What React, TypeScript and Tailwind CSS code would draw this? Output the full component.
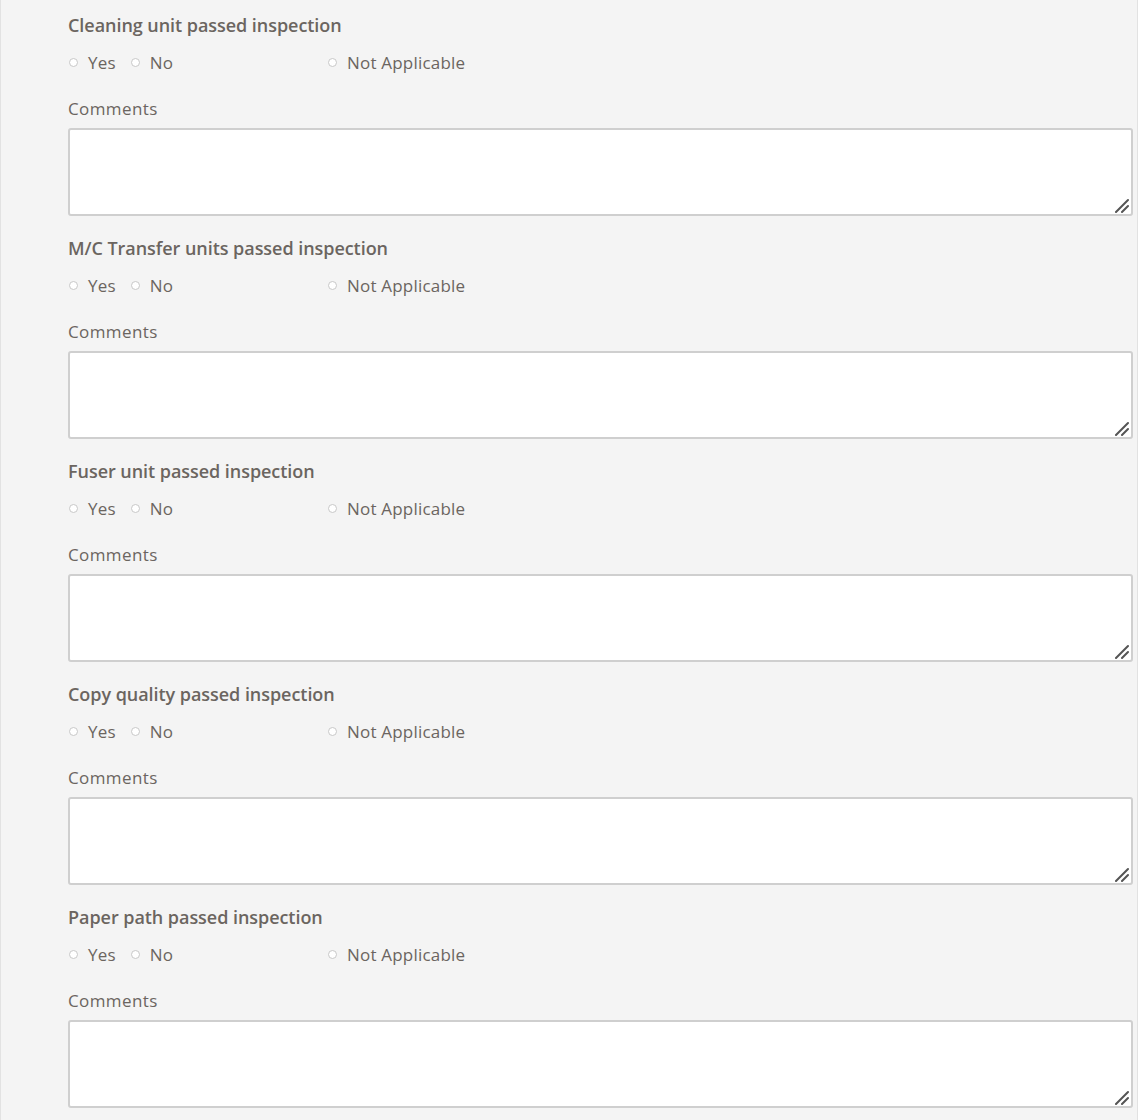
const items = [
  'Cleaning unit passed inspection',
  'M/C Transfer units passed inspection',
  'Fuser unit passed inspection',
  'Copy quality passed inspection',
  'Paper path passed inspection',
];

function Radio({ label, name }: { label: string; name: string }) {
  return (
    <label className="flex items-center gap-[10px]">
      <input type="radio" name={name} className="sr-only" />
      <span className="-mt-[2px] ml-px h-[9px] w-[9px] rounded-full border border-[#c8c8c8] bg-white" />
      <span>{label}</span>
    </label>
  );
}

export default function App() {
  return (
    <div
      className="min-h-[1120px] border-x border-[#e2e2e2] bg-[#f4f4f4] pl-[67px] pr-[4px] text-[#6b6560]"
      style={{ fontFamily: '"Open Sans", sans-serif' }}
    >
      {items.map((title, i) => (
        <div key={title} className="pt-[12px] pb-[7px]">
          <div className="text-[18px] font-semibold leading-[26px] tracking-[-0.05px]">{title}</div>
          <div className="mt-[12px] flex h-[26px] items-center text-[17px] tracking-[0.2px]">
            <div className="flex w-[259px] items-center">
              <Radio label="Yes" name={`q${i}`} />
              <div className="ml-[14px]"><Radio label="No" name={`q${i}`} /></div>
            </div>
            <Radio label="Not Applicable" name={`q${i}`} />
          </div>
          <div className="mt-[20px] text-[17px] leading-[26px] tracking-[0.4px]">Comments</div>
          <div className="relative mt-[6px]">
            <textarea className="block h-[88px] w-full resize-none rounded-[3px] border-2 border-[#cfcfcf] bg-white outline-none" />
            <svg className="pointer-events-none absolute bottom-[3px] right-[4px]" width="15" height="15" viewBox="0 0 15 15">
              <path d="M2 14 L14 2 M8 14 L14 8" stroke="#555" strokeWidth="2" strokeLinecap="round" />
            </svg>
          </div>
        </div>
      ))}
    </div>
  );
}
